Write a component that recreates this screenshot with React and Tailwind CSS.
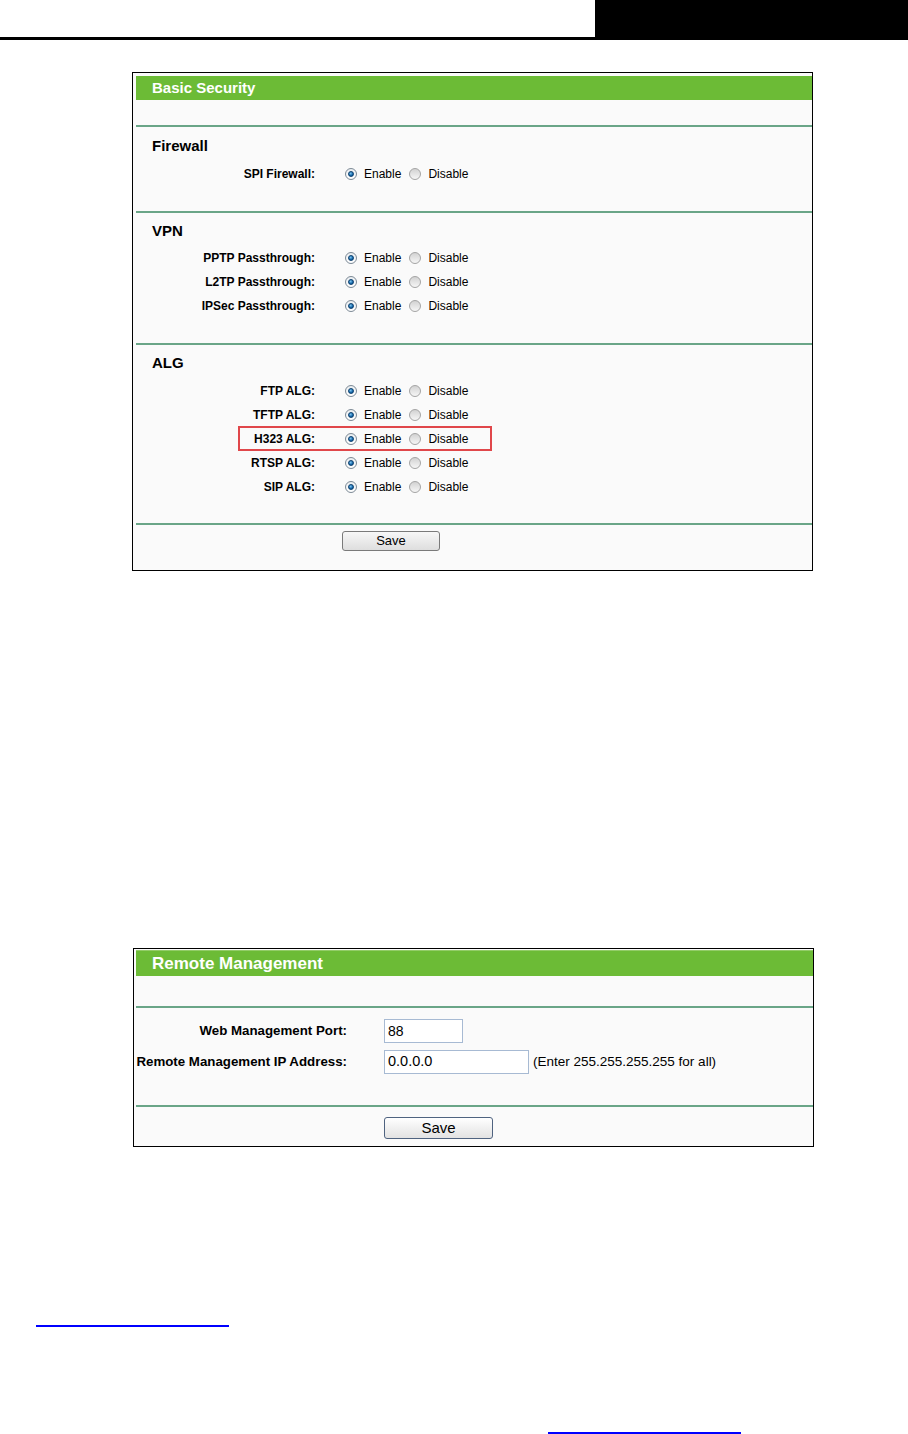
import React from "react";

function Radio({ checked }) {
  if (checked) {
    return (
      <span className="flex h-[12px] w-[12px] shrink-0 items-center justify-center rounded-full border border-[#7d8a96] bg-[linear-gradient(180deg,#e9edf0,#ffffff)]">
        <span className="block h-[6px] w-[6px] rounded-full border border-[#0b3f6e] bg-[radial-gradient(circle_at_40%_35%,#7cc4f0,#1466a8_60%,#0b4d85)]" />
      </span>
    );
  }
  return (
    <span className="block h-[12px] w-[12px] shrink-0 rounded-full border border-[#a4a4a4] bg-[linear-gradient(180deg,#d2d2d2,#f6f6f6)]" />
  );
}

function OptionRow({ label, boxed }) {
  return (
    <div className="relative flex h-[24px] items-center text-[12px] text-black">
      <div className="w-[179px] whitespace-nowrap text-right font-bold">{label}</div>
      <div className="ml-[30px]">
        <Radio checked />
      </div>
      <span className="ml-[7px]">Enable</span>
      <div className="ml-[8px]">
        <Radio />
      </div>
      <span className="ml-[7px]">Disable</span>
      {boxed && (
        <div className="absolute left-[102px] top-[-1px] h-[25px] w-[254px] border-2 border-[#e0474a]" />
      )}
    </div>
  );
}

function Heading({ children }) {
  return (
    <div className="h-[20px] pl-[16px] text-[15px] font-bold leading-[20px] text-black">
      {children}
    </div>
  );
}

export default function App() {
  return (
    <div className="h-[1434px] w-[908px] overflow-hidden bg-white font-['Liberation_Sans',Arial,sans-serif]">
      {/* top bar */}
      <div className="flex h-[40px]">
        <div className="flex-1 border-b-[3px] border-black" />
        <div className="w-[313px] bg-black" />
      </div>

      {/* Basic Security panel */}
      <div className="ml-[132px] mt-[32px] w-[681px] border border-black bg-[#fafafa] pl-[3px] pt-[3px]">
        <div className="h-[24px] bg-[#6cbb36] pl-[16px] text-[15px] font-bold leading-[24px] text-white">
          Basic Security
        </div>
        <div className="h-[25px]" />

        <div className="border-t-2 border-[#6aa587] pb-[25px] pt-[9px]">
          <Heading>Firewall</Heading>
          <div className="mt-[6px]">
            <OptionRow label="SPI Firewall:" />
          </div>
        </div>

        <div className="border-t-2 border-[#6aa587] pb-[25px] pt-[8px]">
          <Heading>VPN</Heading>
          <div className="mt-[5px]">
            <OptionRow label="PPTP Passthrough:" />
            <OptionRow label="L2TP Passthrough:" />
            <OptionRow label="IPSec Passthrough:" />
          </div>
        </div>

        <div className="border-t-2 border-[#6aa587] pb-[24px] pt-[8px]">
          <Heading>ALG</Heading>
          <div className="mt-[6px]">
            <OptionRow label="FTP ALG:" />
            <OptionRow label="TFTP ALG:" />
            <OptionRow label="H323 ALG:" boxed />
            <OptionRow label="RTSP ALG:" />
            <OptionRow label="SIP ALG:" />
          </div>
        </div>

        <div className="border-t-2 border-[#6aa587] pb-[19px] pt-[6px]">
          <div className="ml-[206px] flex h-[20px] w-[98px] items-center justify-center rounded-[3px] border border-[#7a7a7a] bg-[linear-gradient(180deg,#f7f7f7,#dedede)] text-[13px] text-black">
            Save
          </div>
        </div>
      </div>

      {/* Remote Management panel */}
      <div className="ml-[133px] mt-[377px] w-[681px] border border-black bg-[#fafafa] pl-[2px] pt-[1px]">
        <div className="h-[26px] border-t border-[#93cc68] bg-[#6cbb36] pl-[16px] text-[17px] font-bold leading-[25px] text-white">
          Remote Management
        </div>
        <div className="h-[30px]" />

        <div className="border-t-2 border-[#6aa587] pb-[31px] pt-[11px]">
          <div className="flex h-[24px] items-center">
            <div className="w-[211px] whitespace-nowrap text-right text-[13.3px] font-bold text-black">
              Web Management Port:
            </div>
            <div className="ml-[37px] flex h-[24px] w-[79px] items-center border border-[#a7bad3] bg-white pl-[3px] text-[14px] text-black">
              88
            </div>
          </div>
          <div className="mt-[7px] flex h-[24px] items-center">
            <div className="w-[211px] whitespace-nowrap text-right text-[13.3px] font-bold text-black">
              Remote Management IP Address:
            </div>
            <div className="ml-[37px] flex h-[24px] w-[145px] items-center border border-[#a7bad3] bg-white pl-[3px] text-[14.5px] text-black">
              0.0.0.0
            </div>
            <span className="ml-[4px] whitespace-nowrap text-[13.5px] text-black">
              (Enter 255.255.255.255 for all)
            </span>
          </div>
        </div>

        <div className="border-t-2 border-[#6aa587] pb-[7px] pt-[10px]">
          <div className="ml-[248px] flex h-[22px] w-[109px] items-center justify-center rounded-[3px] border border-[#4f6380] bg-[linear-gradient(180deg,#ffffff,#e2e2e2)] text-[15px] text-black">
            Save
          </div>
        </div>
      </div>

      {/* link underlines */}
      <div className="ml-[36px] mt-[178px] h-[2px] w-[193px] bg-[#0000ff]" />
      <div className="ml-[548px] mt-[105px] h-[2px] w-[193px] bg-[#0000ff]" />
    </div>
  );
}
